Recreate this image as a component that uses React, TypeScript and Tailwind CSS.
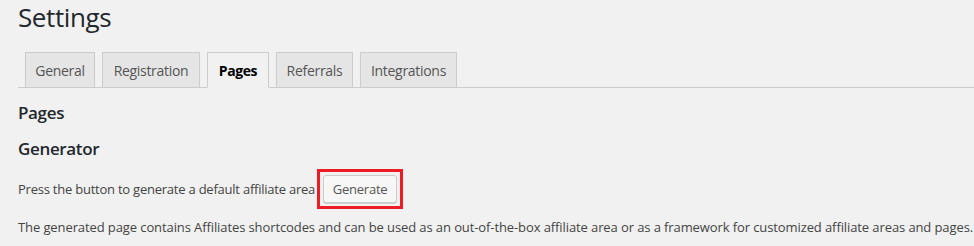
import React from 'react';

const tabs = [
  { label: 'General', width: 'w-[70px]' },
  { label: 'Registration', width: 'w-[98px]' },
  { label: 'Pages', width: 'w-[62px]', active: true },
  { label: 'Referrals', width: 'w-[77px]' },
  { label: 'Integrations', width: 'w-[97px]' },
];

export default function App() {
  return (
    <div className="min-h-[246px] bg-[#f1f1f1] pl-[18px] font-['Open_Sans',sans-serif] text-[#444]">
      {/* Page title */}
      <h1 className="text-[26px] leading-[34px] font-medium tracking-[-0.4px] text-[#23282d]">Settings</h1>

      {/* Tabs */}
      <div className="mt-[18px] flex gap-[7px] border-b border-[#ccc] pl-[7px]">
        {tabs.map((tab) => (
          <div
            key={tab.label}
            className={
              tab.active
                ? `${tab.width} -mb-px flex h-[36px] items-center justify-center border border-[#ccc] border-b-[#f1f1f1] bg-[#f1f1f1] text-[14px] font-bold tracking-[-0.4px] text-black`
                : `${tab.width} -mb-px flex h-[36px] items-center justify-center border border-[#ccc] bg-[#e5e5e5] text-[14px] font-medium tracking-[-0.3px] text-[#555]`
            }
          >
            {tab.label}
          </div>
        ))}
      </div>

      {/* Section */}
      <h2 className="mt-[13px] text-[17px] leading-[24px] font-semibold tracking-[-0.35px] text-[#23282d]">Pages</h2>
      <h3 className="mt-[12px] text-[17px] leading-[24px] font-semibold tracking-[-0.35px] text-[#23282d]">Generator</h3>

      <div className="mt-[14px] flex h-[28px] items-center text-[13px] tracking-[-0.23px]">
        <span className="leading-[28px]">Press the button to generate a default affiliate area</span>
        <div className="relative ml-[8px]">
          <button className="flex h-[28px] w-[74px] items-center justify-center rounded-[3px] border border-[#ccc] bg-[#f7f7f7] text-[13px] leading-[26px] text-[#555] shadow-[0_1px_0_#ccc]">
            Generate
          </button>
          <div className="pointer-events-none absolute -inset-[6px] border-[3px] border-[#ed1c24]" />
        </div>
      </div>

      <p className="mt-[14px] text-[13px] leading-[20px] tracking-[-0.1px] whitespace-nowrap">
        The generated page contains Affiliates shortcodes and can be used as an out-of-the-box affiliate area or as a framework for customized affiliate areas and pages.
      </p>
    </div>
  );
}
